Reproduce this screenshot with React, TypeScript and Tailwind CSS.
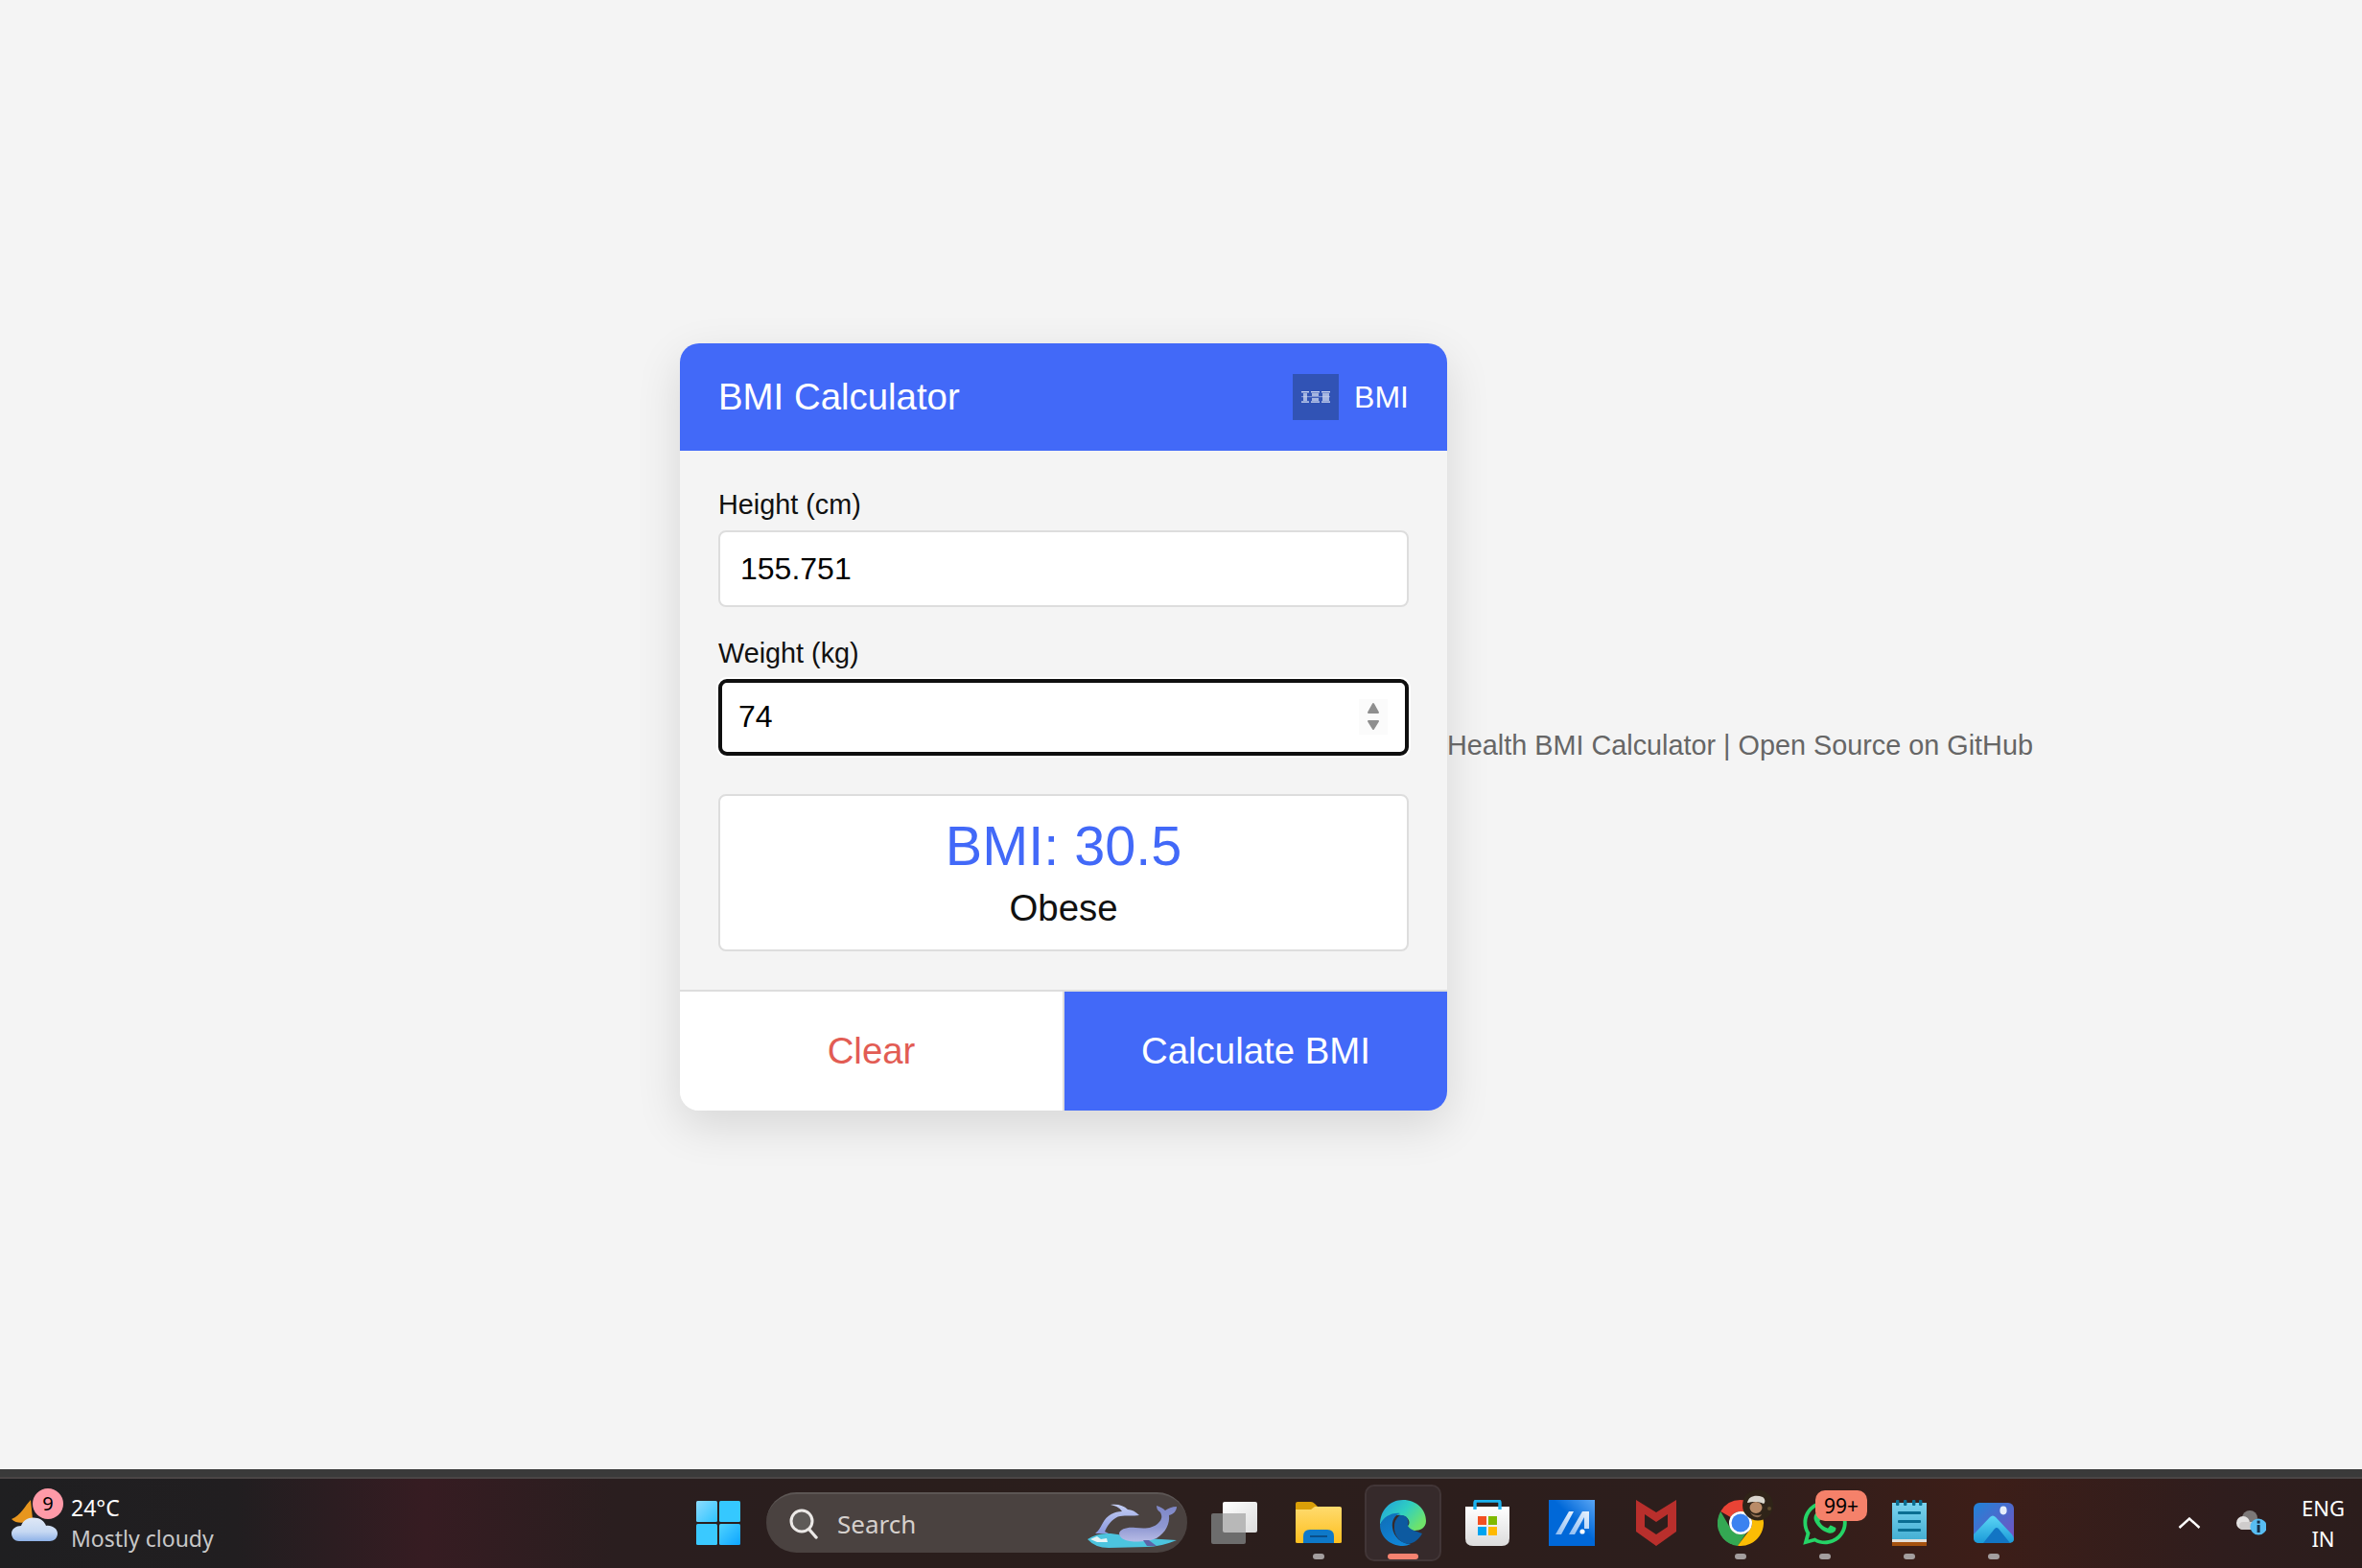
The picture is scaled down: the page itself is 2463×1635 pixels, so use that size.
import { FaWhatsapp } from 'react-icons/fa'

export default function App() {
  return (
    <div className="flex h-[1635px] w-full flex-col overflow-hidden bg-[#f4f4f4] font-['Liberation_Sans',Arial,sans-serif] leading-[1.149]">
      <main className="flex h-[1532px] items-center pb-[16px] pl-[709px]">
        <BmiCard />
        <p className="mt-[40px] whitespace-nowrap text-[28.8px] text-[#666]">
          Health BMI Calculator | Open Source on GitHub
        </p>
      </main>
      <Taskbar />
    </div>
  )
}

function BmiCard() {
  return (
    <div className="w-[800px] shrink-0 overflow-hidden rounded-[20px] bg-[#f4f4f4] shadow-[0_16px_48px_rgba(0,0,0,0.12)]">
      <header className="flex h-[112px] items-center justify-between bg-[#4269f8] px-[40px] text-white">
        <h1 className="text-[38.4px] font-normal">BMI Calculator</h1>
        <div className="flex items-center gap-[16px] text-[32px]">
          <IbmLogo />
          <span>BMI</span>
        </div>
      </header>

      <div className="p-[40px]">
        <label className="mb-[9.6px] block text-[28.8px] text-[#111]">Height (cm)</label>
        <input
          readOnly
          value="155.751"
          className="mb-[32px] block h-[80px] w-full rounded-[8px] border-[2px] border-[#ddd] bg-white px-[21px] text-[32px] text-black outline-none"
        />
        <label className="mb-[9.6px] block text-[28.8px] text-[#111]">Weight (kg)</label>
        <div className="relative mb-[40px]">
          <input
            readOnly
            value="74"
            className="block h-[80px] w-full rounded-[9px] border-[4px] border-[#0f0f0f] bg-white px-[17px] text-[32px] text-black shadow-[0_0_0_2px_#fff] outline-none"
          />
          <Spinner />
        </div>

        <div className="rounded-[8px] border-[2px] border-[#ddd] bg-white pb-[20px] pt-[19.2px] text-center">
          <p className="mb-[10.4px] text-[57.6px] text-[#4269f8]">BMI: 30.5</p>
          <p className="text-[38.4px] text-[#111]">Obese</p>
        </div>
      </div>

      <div className="flex h-[126px] border-t-[2px] border-[#ddd] text-[38.4px]">
        <button className="w-[401px] border-r-[2px] border-[#ddd] bg-white text-[#e25c54]">Clear</button>
        <button className="flex-1 bg-[#4269f8] text-white">Calculate BMI</button>
      </div>
    </div>
  )
}

function IbmLogo() {
  return (
    <div className="flex h-[48px] w-[48px] items-center justify-center bg-[#3153b5]">
      <svg width="30" height="12" viewBox="0 0 30 12" fill="#dfe6f7" opacity="0.9">
        <rect x="0" y="0" width="8" height="1.4" />
        <rect x="10" y="0" width="9" height="1.4" />
        <rect x="21" y="0" width="9" height="1.4" />
        <rect x="2" y="2" width="4" height="8" opacity="0.75" />
        <rect x="11" y="2" width="7" height="3" opacity="0.75" />
        <rect x="11" y="7" width="7" height="3" opacity="0.75" />
        <rect x="22" y="2" width="7" height="8" opacity="0.75" />
        <rect x="0" y="5" width="30" height="1.2" opacity="0.5" />
        <rect x="0" y="10.4" width="8" height="1.4" />
        <rect x="10" y="10.4" width="9" height="1.4" />
        <rect x="21" y="10.4" width="9" height="1.4" />
      </svg>
    </div>
  )
}

function Spinner() {
  return (
    <div className="absolute right-[22px] top-[21px] flex h-[37px] w-[30px] items-center justify-center bg-[#fbfbfb]">
      <svg width="14" height="30" viewBox="0 0 14 30" fill="#8f8f8f" stroke="#8f8f8f" strokeWidth="2" strokeLinejoin="round">
        <path d="M7 2 L12 11 H2 Z" />
        <path d="M2 20 H12 L7 28 Z" />
      </svg>
    </div>
  )
}

function Taskbar() {
  return (
    <footer className="h-[103px] shrink-0 font-['Noto_Sans',sans-serif]">
      <div className="h-[8px] bg-[#3a3a3a]" />
      <div className="h-[2px] bg-[#4a4545]" />
      <div className="flex h-[93px] items-start bg-[linear-gradient(90deg,#1f1f21_0%,#211e20_10%,#361c22_18%,#2a1e1f_26%,#2a1e1c_40%,#2c1e1c_60%,#2d1e1c_72%,#3d1e18_84%,#2f1d1d_94%,#2b1d1c_100%)] pt-[6px]">
        <Weather />
        <div className="ml-[9px] flex h-[80px] w-[80px] items-center justify-center">
          <WindowsLogo />
        </div>
        <SearchBox />
        <div className="ml-[9px] flex gap-[8px]">
          <Slot><TaskViewIcon /></Slot>
          <Slot dot><FolderIcon /></Slot>
          <Slot active><EdgeIcon /></Slot>
          <Slot><StoreIcon /></Slot>
          <Slot><BlueTileIcon /></Slot>
          <Slot><McAfeeIcon /></Slot>
          <Slot dot>
            <ChromeIcon />
            <Avatar />
          </Slot>
          <Slot dot>
            <FaWhatsapp className="text-[52px] text-[#25d366]" />
            <span className="absolute left-[30px] top-[6px] flex h-[32px] w-[54px] items-center justify-center rounded-[10px] bg-[#f5816a] text-[21px] text-black">
              99+
            </span>
          </Slot>
          <Slot dot><NotepadIcon /></Slot>
          <Slot dot><PhotosIcon /></Slot>
        </div>
        <div className="ml-auto flex h-[80px] items-center pr-[18px]">
          <svg width="24" height="12" viewBox="0 0 24 12" fill="none" stroke="#fff" strokeWidth="2.4" className="mr-[36px]">
            <path d="M1.5 11 L12 1.5 L22.5 11" />
          </svg>
          <OneDriveIcon />
          <div className="ml-[37px] w-[45px] text-center text-[22px] leading-[32px] text-white">
            <div>ENG</div>
            <div>IN</div>
          </div>
        </div>
      </div>
    </footer>
  )
}

function Weather() {
  return (
    <div className="relative flex h-[80px] w-[700px] items-center pl-[74px]">
      <svg width="52" height="50" viewBox="0 0 52 50" className="absolute left-[10px] top-[12px]">
        <defs>
          <linearGradient id="cloudFill" x1="0" y1="0" x2="0" y2="1">
            <stop offset="0" stopColor="#dfe8f6" />
            <stop offset="0.6" stopColor="#c6d8f2" />
            <stop offset="1" stopColor="#8fb2e8" />
          </linearGradient>
        </defs>
        <path d="M22 4 C16 10 12 20 2 24 C8 30 18 28 24 24 Z" fill="#e8961e" />
        <path
          d="M10 47 C4 47 2 42 2 39 C2 34 7 31 12 31 C14 24 22 21 29 23 C34 24 37 28 38 31 C44 30 50 34 50 39 C50 44 46 47 42 47 Z"
          fill="url(#cloudFill)"
        />
      </svg>
      <span className="absolute left-[34px] top-[4px] flex h-[32px] w-[32px] items-center justify-center rounded-full bg-[#ff9aa8] text-[20px] text-black">
        9
      </span>
      <div className="mt-[-1px] text-[23px] leading-[32px]">
        <div className="text-white">24°C</div>
        <div className="whitespace-nowrap text-[#c8c8c8]">Mostly cloudy</div>
      </div>
    </div>
  )
}

function SearchBox() {
  return (
    <div className="relative ml-[10px] mt-[8px] flex h-[63px] w-[439px] items-center rounded-full border-t-[2px] border-[#5c5654] bg-[#4a4240] pl-[24px]">
      <svg width="30" height="32" viewBox="0 0 30 32" fill="none">
        <circle cx="13" cy="13" r="11" fill="#5e5a58" stroke="#ece9e7" strokeWidth="3" />
        <path d="M21 22 L28 30" stroke="#ece9e7" strokeWidth="3.4" strokeLinecap="round" />
      </svg>
      <span className="ml-[20px] text-[26px] leading-[32px] text-[#d5d0cd]">Search</span>
      <WhaleArt />
    </div>
  )
}

function WhaleArt() {
  return (
    <svg width="94" height="46" viewBox="0 0 94 46" className="absolute left-[335px] top-[10px]">
      <defs>
        <linearGradient id="dolphinFill" x1="0" y1="0" x2="0" y2="1">
          <stop offset="0" stopColor="#c4cef4" />
          <stop offset="1" stopColor="#8a98de" />
        </linearGradient>
        <linearGradient id="whaleFill" x1="0" y1="0" x2="0" y2="1">
          <stop offset="0" stopColor="#7d86c6" />
          <stop offset="0.6" stopColor="#8f98d2" />
          <stop offset="1" stopColor="#b8bce6" />
        </linearGradient>
      </defs>
      <path d="M0 37 Q10 30 24 31 L60 36 L93 38 Q76 45 62 45 L22 46 Q8 46 0 37 Z" fill="#4cc4de" />
      <path d="M3 37 L10 34 L14 37 L20 36 L21 40 L10 40 Z" fill="#e6f4f6" />
      <path
        d="M8 31 C12 28 13 25 16 20 C20 12 28 8 36 8 C34 5 32 3 24 1 C32 0 38 2 42 6 C46 6 50 8 54 12 C48 13 40 12 34 13 C28 14 22 20 18 29 L22 31 L12 31 Z"
        fill="url(#dolphinFill)"
      />
      <path
        d="M33 31 C34 26 42 24 50 25 C60 26 68 26 74 20 C78 16 78 13 76 9 C73 7 72 5 72 2 C76 3 79 5 81 7 C84 5 88 3 93 3 C93 7 90 11 85 12 C86 20 82 30 72 36 C62 40 52 40 44 39 C38 38 34 36 33 31 Z"
        fill="url(#whaleFill)"
      />
      <path d="M58 38 L62 44 L72 44 L64 38 Z" fill="#5d63a8" />
    </svg>
  )
}

function Slot({ children, dot, active }: { children: React.ReactNode; dot?: boolean; active?: boolean }) {
  return (
    <div
      className={
        active
          ? 'relative flex h-[80px] w-[80px] items-center justify-center rounded-[10px] border-[2px] border-[#423637] bg-[#362a2b]'
          : 'relative flex h-[80px] w-[80px] items-center justify-center'
      }
    >
      {children}
      {dot && <span className="absolute bottom-[2px] left-[34px] h-[6px] w-[12px] rounded-full bg-[#a39e9e]" />}
      {active && <span className="absolute bottom-0 left-[22px] h-[6px] w-[32px] rounded-full bg-[#f58370]" />}
    </div>
  )
}

function WindowsLogo() {
  return (
    <svg width="46" height="46" viewBox="0 0 46 46">
      <defs>
        <linearGradient id="winA" x1="0" y1="0" x2="1" y2="1">
          <stop offset="0" stopColor="#8cdcff" />
          <stop offset="1" stopColor="#2fc4ff" />
        </linearGradient>
        <linearGradient id="winB" x1="0" y1="0" x2="1" y2="1">
          <stop offset="0" stopColor="#4fd3ff" />
          <stop offset="1" stopColor="#0da5ff" />
        </linearGradient>
      </defs>
      <rect x="0" y="0" width="22" height="22" rx="1.5" fill="url(#winA)" />
      <rect x="24" y="0" width="22" height="22" rx="1.5" fill="#35c8ff" />
      <rect x="0" y="24" width="22" height="22" rx="1.5" fill="#3ac9ff" />
      <rect x="24" y="24" width="22" height="22" rx="1.5" fill="url(#winB)" />
    </svg>
  )
}

function TaskViewIcon() {
  return (
    <svg width="48" height="44" viewBox="0 0 48 44">
      <defs>
        <linearGradient id="tvA" x1="0" y1="0" x2="1" y2="1">
          <stop offset="0" stopColor="#ffffff" />
          <stop offset="1" stopColor="#dcdcdc" />
        </linearGradient>
      </defs>
      <rect x="12" y="0" width="36" height="32" rx="2" fill="url(#tvA)" />
      <rect x="0" y="12" width="36" height="32" rx="2" fill="#6d6d6d" />
      <path d="M12 12 H36 V32 H14 A2 2 0 0 1 12 30 Z" fill="#b8b8b8" />
    </svg>
  )
}

function FolderIcon() {
  return (
    <svg width="48" height="44" viewBox="0 0 48 44">
      <defs>
        <linearGradient id="folderFill" x1="0" y1="0" x2="0" y2="1">
          <stop offset="0" stopColor="#ffdb6e" />
          <stop offset="1" stopColor="#fdbf1f" />
        </linearGradient>
      </defs>
      <path d="M2 0 H16 Q18 0 20 2 L24 6 H46 Q48 6 48 8 V14 H0 V2 Q0 0 2 0 Z" fill="#d99f08" />
      <path d="M0 8 H16 L20 5 H46 Q48 5 48 7 V42 Q48 43 46 43 H2 Q0 43 0 42 Z" fill="url(#folderFill)" />
      <path d="M8 43 V36 Q8 29 15 29 H33 Q40 29 40 36 V43 Z" fill="#0e79c9" />
      <rect x="15" y="35" width="18" height="2" fill="#0a4f8a" />
    </svg>
  )
}

function EdgeIcon() {
  return (
    <svg width="48" height="48" viewBox="0 0 48 48">
      <defs>
        <linearGradient id="edgeTop" x1="0" y1="0" x2="1" y2="0.6">
          <stop offset="0" stopColor="#1f9de0" />
          <stop offset="0.55" stopColor="#30cfc0" />
          <stop offset="1" stopColor="#6fe36a" />
        </linearGradient>
        <linearGradient id="edgeMid" x1="0" y1="0" x2="0.6" y2="1">
          <stop offset="0" stopColor="#0f6cb5" />
          <stop offset="1" stopColor="#1086d8" />
        </linearGradient>
      </defs>
      <path d="M24 0 C38 0 48 10 48 22 C48 29 42 32 36 32 C30 32 28 29 29 27 C32 25 31 17 22 16 C12 15 4 20 0 26 C0 11 10 0 24 0 Z" fill="url(#edgeTop)" />
      <path d="M0 26 C3 18 12 13 21 14 C15 16 12 22 13 29 C14 38 22 46 32 46 C29 47 27 48 24 48 C10 48 0 38 0 26 Z" fill="url(#edgeMid)" />
      <path d="M21 16 C28 15 31 21 29 27 C31 31 36 32 44 35 C40 42 35 45 30 46 C20 45 14 36 15 27 C15 22 18 18 21 16 Z" fill="#0d5aa0" />
    </svg>
  )
}

function StoreIcon() {
  return (
    <svg width="46" height="48" viewBox="0 0 46 48">
      <defs>
        <linearGradient id="storeBag" x1="0" y1="0" x2="0" y2="1">
          <stop offset="0" stopColor="#ffffff" />
          <stop offset="1" stopColor="#dcdcdc" />
        </linearGradient>
      </defs>
      <path d="M0 7 H46 V40 Q46 48 38 48 H8 Q0 48 0 40 Z" fill="url(#storeBag)" />
      <path d="M10 10 V3 Q10 1 12 1 H34 Q36 1 36 3 V10" fill="none" stroke="#1bb3f0" strokeWidth="3.4" />
      <rect x="13" y="17" width="9" height="9" fill="#f25022" />
      <rect x="24" y="17" width="9" height="9" fill="#7fba00" />
      <rect x="13" y="28" width="9" height="9" fill="#00a4ef" />
      <rect x="24" y="28" width="9" height="9" fill="#ffb900" />
    </svg>
  )
}

function BlueTileIcon() {
  return (
    <svg width="48" height="48" viewBox="0 0 48 48">
      <defs>
        <linearGradient id="tileFill" x1="0" y1="1" x2="1" y2="0">
          <stop offset="0.55" stopColor="#0068d8" />
          <stop offset="1" stopColor="#5aa6f5" />
        </linearGradient>
        <linearGradient id="tileStripe" x1="0" y1="1" x2="1" y2="0">
          <stop offset="0" stopColor="#8dbcf2" />
          <stop offset="1" stopColor="#e8f2fd" />
        </linearGradient>
      </defs>
      <rect width="48" height="48" fill="url(#tileFill)" />
      <path d="M7 36 L21 12 H26 L13 36 Z" fill="url(#tileStripe)" />
      <path d="M21 36 L35 12 H42 V30 H37 V18 L27 36 Z" fill="url(#tileStripe)" />
      <circle cx="35" cy="33" r="2.6" fill="#fff" />
    </svg>
  )
}

function McAfeeIcon() {
  return (
    <svg width="42" height="48" viewBox="0 0 42 48">
      <path
        fillRule="evenodd"
        d="M0 0 L21 13 L42 0 V33 L21 48 L0 33 Z M9 15 V28 L21 36 L33 28 V15 L21 23 Z"
        fill="#b92f2c"
      />
    </svg>
  )
}

function ChromeIcon() {
  return (
    <svg width="48" height="48" viewBox="0 0 48 48">
      <path d="M24 0 A24 24 0 0 1 44.8 12 H24 A12 12 0 0 0 13.6 18 L3.2 12 A24 24 0 0 1 24 0 Z" fill="#ea4335" />
      <path d="M3.2 12 L13.6 30 A12 12 0 0 0 24 36 L24 36 L13.6 46 A24 24 0 0 1 3.2 12 Z" fill="#34a853" />
      <path d="M13.6 30 A12 12 0 0 0 30 34.4 L21 48 A24 24 0 0 1 3.2 36 Z" fill="#34a853" />
      <path d="M44.8 12 A24 24 0 0 1 21 47.8 L34.4 30 A12 12 0 0 0 34.4 18 L24 12 Z" fill="#fbbc04" />
      <circle cx="24" cy="24" r="12" fill="#fff" />
      <circle cx="24" cy="24" r="9.5" fill="#3b82f0" />
    </svg>
  )
}

function Avatar() {
  return (
    <svg width="32" height="33" viewBox="0 0 32 33" className="absolute left-[42px] top-[5px]">
      <circle cx="16" cy="16.5" r="16" fill="#2f2418" />
      <path d="M5 14 C6 7 14 5 21 8 C24 10 24 14 22 15 C16 12 10 13 5 14 Z" fill="#d9d6cc" />
      <ellipse cx="14" cy="19" rx="6.5" ry="6" fill="#b98c68" />
      <path d="M8 24 C11 30 18 31 20 26 C17 28 11 27 8 24 Z" fill="#8a6a50" />
      <circle cx="28" cy="20" r="2" fill="#5b4a2c" />
    </svg>
  )
}

function NotepadIcon() {
  return (
    <svg width="36" height="48" viewBox="0 0 36 48">
      <defs>
        <linearGradient id="padFill" x1="0" y1="0" x2="0" y2="1">
          <stop offset="0" stopColor="#7bd3ee" />
          <stop offset="1" stopColor="#45b0d4" />
        </linearGradient>
      </defs>
      <rect x="0" y="3" width="36" height="38" fill="url(#padFill)" />
      <rect x="0" y="41" width="36" height="3" fill="#e4e0da" />
      <rect x="0" y="44" width="36" height="4" fill="#a5520f" />
      <rect x="4" y="0" width="3.4" height="6" rx="1" fill="#0a6e92" />
      <rect x="12" y="0" width="3.4" height="6" rx="1" fill="#0a6e92" />
      <rect x="21" y="0" width="3.4" height="6" rx="1" fill="#0a6e92" />
      <rect x="28" y="0" width="3.4" height="6" rx="1" fill="#0a6e92" />
      <rect x="6" y="12" width="24" height="3" rx="1" fill="#0a6e92" />
      <rect x="6" y="21" width="24" height="3" rx="1" fill="#0a6e92" />
      <rect x="6" y="30" width="24" height="3" rx="1" fill="#0a6e92" />
    </svg>
  )
}

function PhotosIcon() {
  return (
    <svg width="42" height="42" viewBox="0 0 42 42">
      <defs>
        <linearGradient id="photoBg" x1="0" y1="0" x2="1" y2="1">
          <stop offset="0" stopColor="#1f84d8" />
          <stop offset="1" stopColor="#7a4fc0" />
        </linearGradient>
        <linearGradient id="photoHill" x1="0" y1="0" x2="0" y2="1">
          <stop offset="0" stopColor="#5cd6f5" />
          <stop offset="1" stopColor="#1a9ad8" />
        </linearGradient>
      </defs>
      <rect width="42" height="42" rx="6" fill="url(#photoBg)" />
      <path d="M0 33 L17 15 Q20 12 23 15 L40 33 Q42 36 42 38 Q42 42 36 42 H6 Q0 42 0 37 Z" fill="url(#photoHill)" />
      <path d="M10 42 L22 27 Q24 25 26 27 L38 42 Z" fill="#1275c4" />
      <ellipse cx="31" cy="8" rx="3.6" ry="4.4" fill="#e6eefb" />
    </svg>
  )
}

function OneDriveIcon() {
  return (
    <svg width="32" height="26" viewBox="0 0 32 26">
      <circle cx="15" cy="8" r="8" fill="#7c7878" />
      <circle cx="8" cy="13" r="7" fill="#e4e2e2" />
      <rect x="4" y="12" width="18" height="8" rx="4" fill="#cfcccc" />
      <circle cx="24" cy="17" r="8.6" fill="#58bdf2" />
      <rect x="22.6" y="15" width="3" height="8" fill="#14304a" />
      <rect x="22.6" y="10.6" width="3" height="3" fill="#14304a" />
    </svg>
  )
}
